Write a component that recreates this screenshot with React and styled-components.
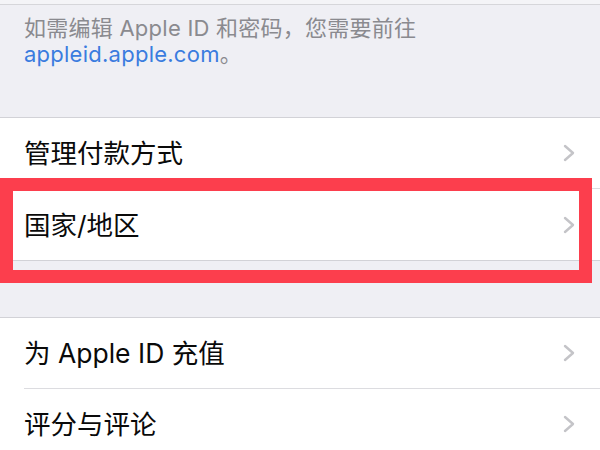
import React from "react";
import styled, { createGlobalStyle } from "styled-components";

const Global = createGlobalStyle`
  html, body { margin: 0; padding: 0; }
  body {
    background: #efeff4;
    font-family: "Inter", "Noto Sans CJK SC", sans-serif;
    -webkit-font-smoothing: antialiased;
  }
`;

const Page = styled.div`
  width: 600px;
  height: 450px;
  overflow: hidden;
  background: #efeff4;
`;

const TopStrip = styled.div`
  height: 4px;
  background: #f4f4f7;
  border-bottom: 1px solid #d6d6da;
`;

const Note = styled.div`
  height: 112px;
  box-sizing: border-box;
  padding: 10px 24px 0;
  font-size: 22px;
  line-height: 26px;
  letter-spacing: 0.25px;
  color: #8a8a8f;
`;

const Link = styled.span`
  color: #3a7cdf;
`;

const Group = styled.div`
  background: #fff;
  border-top: 1px solid #d2d2d7;
  border-bottom: 1px solid #d2d2d7;
  margin-bottom: ${(p) => p.$gap || 0}px;
`;

const Row = styled.div`
  position: relative;
  padding-left: 24px;
  display: flex;
`;

const RowInner = styled.div`
  flex: 1;
  height: 71px;
  box-sizing: border-box;
  display: flex;
  align-items: center;
  justify-content: space-between;
  padding-right: 25px;
  border-bottom: ${(p) => (p.$last ? "none" : "1px solid #dcdce0")};
`;

const Label = styled.span`
  font-size: 26.5px;
  color: #0a0a0a;
  margin-top: -3px;
`;

const Highlight = styled.div`
  position: absolute;
  top: -11px;
  bottom: -23px;
  left: 0;
  right: 8px;
  border: 13px solid #fc3e4d;
  pointer-events: none;
`;

const Chevron = () => (
  <svg width="12" height="18" viewBox="0 0 12 18">
    <polyline
      points="2,2 10,9 2,16"
      fill="none"
      stroke="#c4c4c8"
      strokeWidth="2.4"
      strokeLinecap="round"
      strokeLinejoin="round"
    />
  </svg>
);

const Item = ({ label, last, highlighted }) => (
  <Row>
    <RowInner $last={last}>
      <Label>{label}</Label>
      <Chevron />
    </RowInner>
    {highlighted && <Highlight />}
  </Row>
);

export default function App() {
  return (
    <Page>
      <Global />
      <TopStrip />
      <Note>
        如需编辑 Apple ID 和密码，您需要前往
        <br />
        <Link>appleid.apple.com</Link>。
      </Note>
      <Group $gap={56}>
        <Item label="管理付款方式" />
        <Item label="国家/地区" last highlighted />
      </Group>
      <Group>
        <Item label="为 Apple ID 充值" />
        <Item label="评分与评论" />
      </Group>
    </Page>
  );
}
